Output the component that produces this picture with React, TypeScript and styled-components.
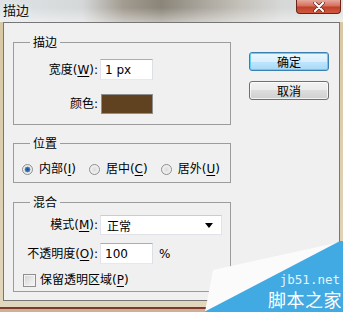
import React from "react";
import styled, { createGlobalStyle } from "styled-components";

const GlobalStyle = createGlobalStyle`
  html, body {
    margin: 0;
    padding: 0;
    background: #ffffff;
  }
  body {
    font-family: "DejaVu Sans", "Noto Sans CJK SC", sans-serif;
    font-size: 12px;
    color: #000;
  }
`;

const App = () => {
  return (
    <>
      <GlobalStyle />
      <Window>
        <TitleBar>
          <Title>描边</Title>
          <CloseButton>
            <svg width="14" height="10" viewBox="0 0 14 10">
              <path d="M3 1 L11 9 M11 1 L3 9" stroke="#5a1a10" strokeWidth="3.4" strokeLinecap="round" />
              <path d="M3 1 L11 9 M11 1 L3 9" stroke="#ffffff" strokeWidth="2.2" strokeLinecap="round" />
            </svg>
          </CloseButton>
        </TitleBar>

        <Frame>
          <Client>
            <Groups>
              <Group>
                <Legend>描边</Legend>
                <FieldGrid $pad="9px 0 10px 0" $rowGap={14}>
                  <Label>
                    宽度(<U>W</U>):
                  </Label>
                  <TextBox readOnly value="1 px" $width={53} />
                  <Label>颜色:</Label>
                  <Swatch $color="#614220" />
                </FieldGrid>
              </Group>

              <Group>
                <Legend>位置</Legend>
                <RadioRow>
                  <RadioItem>
                    <RadioDot $checked />
                    <span>
                      内部(<U>I</U>)
                    </span>
                  </RadioItem>
                  <RadioItem>
                    <RadioDot />
                    <span>
                      居中(<U>C</U>)
                    </span>
                  </RadioItem>
                  <RadioItem>
                    <RadioDot />
                    <span>
                      居外(<U>U</U>)
                    </span>
                  </RadioItem>
                </RadioRow>
              </Group>

              <Group $gapTop={1}>
                <Legend>混合</Legend>
                <FieldGrid $pad="5px 0 3px 0" $rowGap={8}>
                  <Label>
                    模式(<U>M</U>):
                  </Label>
                  <Select>
                    <span>正常</span>
                    <Caret />
                  </Select>
                  <Label>
                    不透明度(<U>O</U>):
                  </Label>
                  <Inline>
                    <TextBox readOnly value="100" $width={53} />
                    <Unit>%</Unit>
                  </Inline>
                  <CheckRow>
                    <CheckBox />
                    <span>
                      保留透明区域(<U>P</U>)
                    </span>
                  </CheckRow>
                </FieldGrid>
              </Group>
            </Groups>

            <Buttons>
              <Button $primary>确定</Button>
              <Button>取消</Button>
            </Buttons>
          </Client>
        </Frame>

        <Watermark>
          <svg width="140" height="72" viewBox="0 0 140 72">
            <polygon points="10,30 137,2 2,72" fill="#fbfbfb" />
            <polygon points="137,1 140,1 140,72 1,72" fill="#41aae2" />
          </svg>
          <MarkSite>jb51.net</MarkSite>
          <MarkName>脚本之家</MarkName>
        </Watermark>
      </Window>
    </>
  );
};

export default App;

// styled components

const Window = styled.div`
  position: relative;
  width: 343px;
  height: 312px;
  overflow: hidden;
  display: flex;
  flex-direction: column;
  background: #d6c6a2;
`;

const TitleBar = styled.div`
  height: 22px;
  flex-shrink: 0;
  display: flex;
  justify-content: space-between;
  align-items: flex-start;
  padding-left: 3px;
  background:
    linear-gradient(180deg, rgba(255, 255, 255, 0) 35%, rgba(255, 255, 255, 0.45) 100%),
    linear-gradient(
      90deg,
      #dfe3e5 0%,
      #d5d8d9 24%,
      #a29b90 36%,
      #8b8579 47%,
      #a8a39a 58%,
      #c4c1ba 70%,
      #d6d8d7 82%,
      #e1e3e3 100%
    );
`;

const Title = styled.span`
  font-family: "Noto Sans CJK SC", sans-serif;
  font-size: 13px;
  line-height: 18px;
  margin-top: 1px;
  color: #111;
  text-shadow: 0 0 6px rgba(255, 255, 255, 0.9);
`;

const CloseButton = styled.div`
  width: 45px;
  height: 14px;
  margin-right: 2px;
  box-sizing: border-box;
  border: 1px solid #6a2418;
  border-top: none;
  border-radius: 0 0 4px 4px;
  background: linear-gradient(180deg, #e6a89c 0%, #d6705e 45%, #c2402a 55%, #cf5a3e 100%);
  display: flex;
  align-items: center;
  justify-content: center;
`;

const Frame = styled.div`
  flex: 1;
  display: flex;
  padding: 0 3px 11px 3px;
  background: linear-gradient(
    180deg,
    #d8c8a4 0%,
    #e2d6bc calc(100% - 5px),
    #7d3a2c calc(100% - 5px),
    #7d3a2c calc(100% - 3px),
    #cfb096 calc(100% - 3px)
  );
`;

const Client = styled.div`
  flex: 1;
  display: flex;
  border: 1px solid #767676;
  background: #f0f0f0;
  padding: 11px 10px 0 9px;
`;

const Groups = styled.div`
  width: 218px;
  display: flex;
  flex-direction: column;
  gap: 10px;
`;

const Group = styled.fieldset<{ $gapTop?: number }>`
  margin: ${(p) => p.$gapTop || 0}px 0 0 0;
  padding: 0;
  min-width: 0;
  border: 1px solid #9c9c9c;
`;

const Legend = styled.legend`
  margin-left: 16px;
  padding: 0 3px;
  font-family: "Noto Sans CJK SC", sans-serif;
  font-size: 12px;
  line-height: 16px;
`;

const FieldGrid = styled.div<{ $pad: string; $rowGap: number }>`
  display: grid;
  grid-template-columns: 84px auto;
  column-gap: 2px;
  row-gap: ${(p) => p.$rowGap}px;
  align-items: center;
  padding: ${(p) => p.$pad};
`;

const Label = styled.span`
  text-align: right;
  white-space: nowrap;
  line-height: 16px;
`;

const U = styled.span`
  text-decoration: underline;
  text-underline-offset: 2px;
`;

const TextBox = styled.input<{ $width: number }>`
  width: ${(p) => p.$width}px;
  height: 21px;
  box-sizing: border-box;
  margin: 0;
  padding: 0 0 0 4px;
  border: 1px solid;
  border-color: #abadb3 #dbdfe6 #e3e9ef #e2e3ea;
  background: #ffffff;
  font-family: "DejaVu Sans", "Noto Sans CJK SC", sans-serif;
  font-size: 12px;
  color: #000;
  outline: none;
`;

const Swatch = styled.div<{ $color: string }>`
  width: 52px;
  height: 20px;
  box-sizing: border-box;
  margin-left: 1px;
  border: 1px solid #8e8e8e;
  background: ${(p) => p.$color};
`;

const RadioRow = styled.div`
  display: flex;
  align-items: center;
  gap: 13px;
  padding: 10px 0 5px 8px;
  line-height: 16px;
`;

const RadioItem = styled.label`
  display: flex;
  align-items: center;
  gap: 6px;
  white-space: nowrap;
`;

const RadioDot = styled.span<{ $checked?: boolean }>`
  width: 11px;
  height: 11px;
  border-radius: 50%;
  box-sizing: border-box;
  border: 1px solid #8f8f8f;
  background: ${(p) =>
    p.$checked
      ? "radial-gradient(circle, #1c4f86 0%, #2f6fb1 30%, #7fb0dc 45%, #e8e8e8 50%, #f7f7f7 100%)"
      : "radial-gradient(circle, #dcdcdc 0%, #ececec 50%, #f8f8f8 100%)"};
`;

const Select = styled.div`
  width: 122px;
  height: 20px;
  box-sizing: border-box;
  display: flex;
  align-items: center;
  justify-content: space-between;
  padding: 0 8px 0 6px;
  border: 1px solid #e2e3ea;
  border-top-color: #c9ccd3;
  background: #ffffff;
  font-family: "Noto Sans CJK SC", sans-serif;
`;

const Caret = styled.span`
  width: 0;
  height: 0;
  border-left: 4px solid transparent;
  border-right: 4px solid transparent;
  border-top: 5px solid #000;
`;

const Inline = styled.div`
  display: flex;
  align-items: center;
`;

const Unit = styled.span`
  margin-left: 6px;
`;

const CheckRow = styled.label`
  grid-column: 1 / -1;
  display: flex;
  align-items: center;
  gap: 4px;
  padding-left: 9px;
  line-height: 16px;
  white-space: nowrap;
`;

const CheckBox = styled.span`
  width: 13px;
  height: 13px;
  box-sizing: border-box;
  border: 1px solid #8f8f8f;
  background: linear-gradient(135deg, #d2d2d2 0%, #eaeaea 60%, #f6f6f6 100%);
  box-shadow: inset 0 0 0 1px #f4f4f4;
`;

const Buttons = styled.div`
  display: flex;
  flex-direction: column;
  gap: 10px;
  margin-left: 18px;
  padding-top: 18px;
`;

const Button = styled.button<{ $primary?: boolean }>`
  width: 80px;
  height: 19px;
  margin: 0;
  padding: 0;
  box-sizing: border-box;
  border: 1px solid ${(p) => (p.$primary ? "#3c7fb1" : "#707070")};
  border-radius: 3px;
  background: ${(p) =>
    p.$primary
      ? "linear-gradient(180deg, #eaf6fd 0%, #d9f0fc 50%, #bee6fd 50%, #a7d9f5 100%)"
      : "linear-gradient(180deg, #f2f2f2 0%, #ebebeb 50%, #dddddd 50%, #cfcfcf 100%)"};
  box-shadow: inset 0 0 0 1px
    ${(p) => (p.$primary ? "#5fd1f6" : "rgba(255, 255, 255, 0.7)")};
  font-family: "Noto Sans CJK SC", sans-serif;
  font-size: 12px;
  line-height: 16px;
  color: #000;
`;

const Watermark = styled.div`
  position: absolute;
  right: 0;
  bottom: 0;
  width: 140px;
  height: 72px;
  pointer-events: none;

  svg {
    position: absolute;
    left: 0;
    top: 0;
  }
`;

const MarkSite = styled.span`
  position: absolute;
  right: 3px;
  top: 33px;
  font-family: "DejaVu Sans Mono", monospace;
  font-size: 12.5px;
  line-height: 14px;
  color: #e4f3fc;
`;

const MarkName = styled.span`
  position: absolute;
  right: 1px;
  top: 47px;
  font-family: "Noto Sans CJK SC", sans-serif;
  font-size: 18px;
  line-height: 24px;
  color: #ffffff;
  letter-spacing: 0.5px;
`;
